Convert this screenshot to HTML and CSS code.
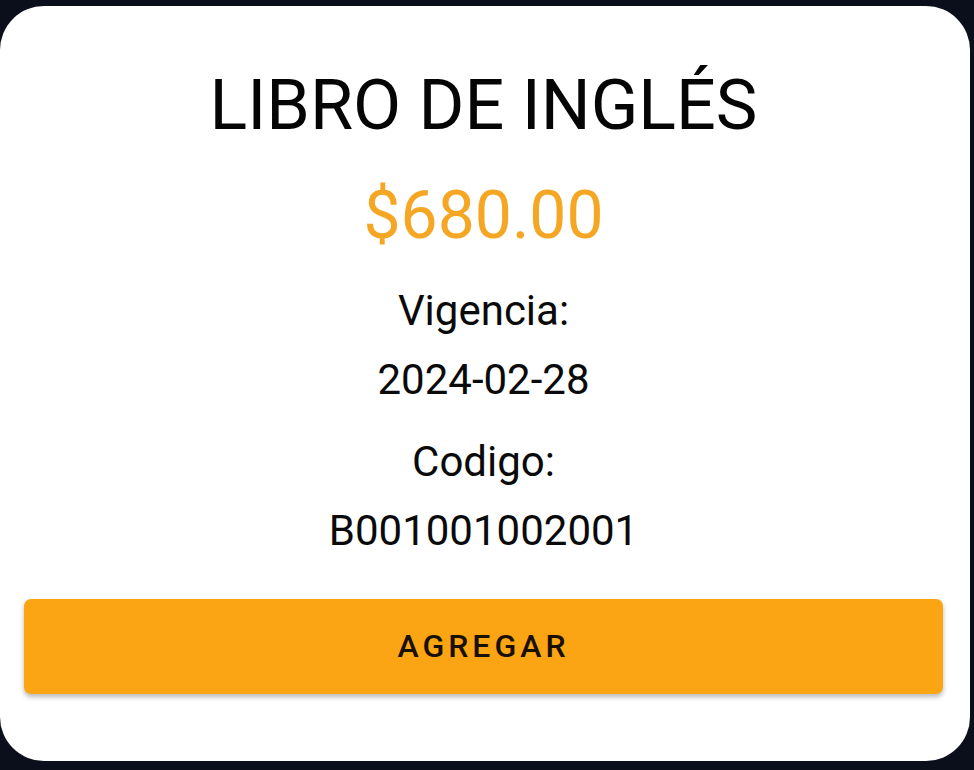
FILE: index.html
```html
<!DOCTYPE html>
<html lang="es">
<head>
<meta charset="utf-8">
<title>Libro de inglés</title>
<link rel="stylesheet" href="styles.css">
</head>
<body>
  <main class="card">
    <h1 class="title">LIBRO DE INGLÉS</h1>
    <div class="price">$680.00</div>
    <div class="info">
      <div class="field">
        <div class="line">Vigencia:</div>
        <div class="line">2024-02-28</div>
      </div>
      <div class="field">
        <div class="line">Codigo:</div>
        <div class="line">B001001002001</div>
      </div>
    </div>
    <button class="add-btn" type="button">AGREGAR</button>
  </main>
</body>
</html>
```

FILE: styles.css
```css
* { box-sizing: border-box; }

html, body {
  margin: 0;
  padding: 0;
  background: #0b0f1c;
  width: 974px;
  height: 770px;
  overflow: hidden;
}

body {
  font-family: Roboto, "Noto Sans", sans-serif;
  color: #111;
  padding-top: 6px;
}

.card {
  width: 970px;
  height: 755px;
  background: #ffffff;
  border-radius: 44px;
  padding: 58px 27px 0 24px;
  display: flex;
  flex-direction: column;
  align-items: stretch;
}

.title {
  margin: 0;
  font-weight: 400;
  font-size: 70px;
  line-height: 82px;
  text-align: center;
  color: #050505;
}

.price {
  margin-top: 34px;
  font-size: 66px;
  line-height: 72px;
  letter-spacing: 0;
  text-align: center;
  color: #f5a623;
}

.info {
  margin-top: 24px;
  display: flex;
  flex-direction: column;
  gap: 13px;
}

.field {
  display: flex;
  flex-direction: column;
}

.line {
  font-size: 42px;
  line-height: 69px;
  text-align: center;
  color: #0a0a0a;
}

.add-btn {
  margin-top: 34px;
  height: 95px;
  border: none;
  border-radius: 7px;
  background: #fba514;
  box-shadow: 0 3px 5px rgba(0, 0, 0, 0.28);
  font-family: Roboto, "Noto Sans", sans-serif;
  font-weight: 500;
  font-size: 32px;
  line-height: 95px;
  letter-spacing: 4px;
  color: #1a1000;
  padding: 0;
  text-align: center;
}
```
